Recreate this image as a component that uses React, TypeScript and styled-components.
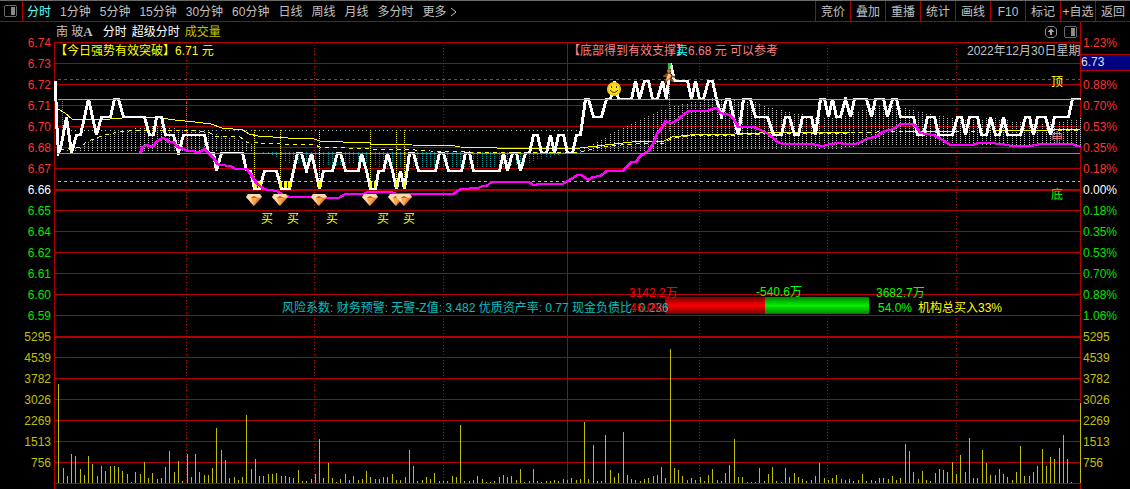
import React from "react";
import styled, { createGlobalStyle } from "styled-components";

const GRID = "#b00000";
const GREY = "#c0c0c0";

const Global = createGlobalStyle`
  * { box-sizing: border-box; }
  body {
    margin: 0;
    background: #000;
    color: ${GREY};
    font: 12px/14px "Liberation Sans", "Noto Sans CJK SC", sans-serif;
  }
`;

const Page = styled.div`
  display: flex;
  flex-direction: column;
  background: #000;
  overflow: hidden;
`;

const Toolbar = styled.header`
  display: flex;
  align-items: stretch;
  height: 22px;
  border-top: 1px solid #6a6a6a;
  border-bottom: 1px solid ${GRID};
`;

const BareButton = styled.button`
  padding: 0;
  border: 0;
  background: none;
  color: inherit;
  font: inherit;
  white-space: nowrap;
  cursor: pointer;
`;

const PanelToggle = styled(BareButton)`
  display: flex;
  align-items: center;
  width: 23px;
  padding-left: 4px;
  border-right: 1px solid ${GRID};
`;

const Periods = styled.nav`
  display: flex;
  flex: 1;
  gap: 9px;
  padding: 2px 0 0 4px;
`;

const PeriodButton = styled(BareButton)<{ $active?: boolean }>`
  display: flex;
  align-items: center;
  gap: 3px;
  color: ${(p) => (p.$active ? "#54ffff" : GREY)};
`;

const Actions = styled.nav`
  display: flex;
`;

const ActionButton = styled(BareButton)`
  width: 35px;
  padding-top: 2px;
  border-left: 1px solid ${GRID};
`;

const Body = styled.main`
  display: grid;
  grid-template-columns: 54px minmax(0, 1fr) 50px;
`;

const Axis = styled.ul<{ $side: "left" | "right" }>`
  margin: 0;
  padding: 11px 0 0;
  list-style: none;
  text-align: ${(p) => (p.$side === "left" ? "right" : "left")};
  border-left: ${(p) => (p.$side === "right" ? `1px solid ${GRID}` : "0")};
`;

const Tick = styled.li<{ $color: string }>`
  height: 21px;
  padding: 0 3px 0 2px;
  line-height: 21px;
  color: ${(p) => p.$color};
`;

const CurrentPrice = styled.li`
  height: 17px;
  margin-bottom: 4px;
  border: solid ${GRID};
  border-width: 1px 0;
  background: #000080;
  color: #e0e0e0;
  line-height: 14px;
`;

const Center = styled.section`
  min-width: 0;
`;

const Heading = styled.div`
  display: flex;
  align-items: center;
  gap: 5px;
  height: 20px;
  padding: 0 3px 0 2px;
  color: #fff;
  line-height: 16px;
`;

const StockName = styled.h1`
  margin: 0 5px 0 0;
  font: inherit;
  color: ${GREY};
`;

const Latin = styled.span`
  font: bold 13px/14px "Liberation Serif", serif;
`;

const VolumeName = styled.span`
  flex: 1;
  color: #c0c000;
`;

const HeadingTools = styled.div`
  display: flex;
  gap: 7px;
`;

const IconButton = styled(BareButton)`
  display: flex;
`;

const Plot = styled.div`
  position: relative;
  height: 447px;
`;

const Canvas = styled.svg`
  display: block;
  width: 100%;
  height: 447px;
  overflow: visible;
`;

const Clip = styled.div`
  position: absolute;
  inset: 0;
  overflow: hidden;
`;

const Note = styled.span<{ $color: string }>`
  position: absolute;
  color: ${(p) => p.$color};
  line-height: 16px;
  white-space: nowrap;
`;

const Marker = styled.svg`
  position: absolute;
  overflow: visible;
`;

const FlowBar = styled.div<{ $tone: "buy" | "sell" }>`
  position: absolute;
  top: 255px;
  height: 17px;
  background: ${(p) =>
    p.$tone === "buy"
      ? "linear-gradient(#780000, #ff0000 50%, #780000)"
      : "linear-gradient(#008000, #00f000 50%, #008000)"};
`;

/* Horizontal scale: one slot per trading minute, 240 slots across the plot. */
const LEFT = 54;
const WIDTH = 1026;
const minuteX = (i: number) => LEFT + Math.round((i * WIDTH) / 240);
const pct = (x: number) => `${((x - LEFT) / WIDTH) * 100}%`;

const volume = [
  99, 15, 7, 29, 27, 14, 8, 27, 19, 7, 17, 12, 17, 17, 16, 12, 9, 1, 11, 9,
  21, 5, 10, 4, 5, 16, 32, 11, 22, 2, 29, 6, 29, 11, 8, 8, 15, 55, 33, 23,
  5, 6, 3, 6, 68, 14, 24, 7, 7, 9, 9, 10, 7, 7, 6, 5, 13, 2, 2, 4,
  9, 44, 5, 20, 5, 1, 4, 9, 3, 7, 3, 4, 12, 6, 4, 4, 6, 6, 9, 3,
  3, 6, 33, 17, 2, 3, 6, 4, 10, 2, 2, 2, 7, 6, 58, 2, 2, 3, 7, 4,
  1, 1, 2, 6, 8, 6, 7, 3, 14, 1, 2, 14, 2, 1, 2, 2, 3, 2, 4, 3,
  5, 3, 4, 61, 4, 38, 2, 2, 48, 13, 6, 10, 51, 8, 4, 3, 2, 4, 5, 7,
  8, 16, 5, 134, 15, 13, 7, 3, 5, 3, 6, 2, 8, 14, 3, 2, 10, 18, 44, 6,
  6, 1, 1, 1, 15, 2, 9, 16, 2, 1, 15, 6, 10, 6, 4, 2, 3, 7, 20, 5,
  3, 5, 8, 4, 3, 4, 2, 3, 9, 2, 3, 2, 5, 5, 4, 7, 3, 5, 39, 32,
  11, 4, 12, 3, 2, 10, 14, 13, 11, 21, 9, 28, 11, 45, 5, 5, 33, 20, 8, 8,
  14, 9, 6, 3, 11, 37, 7, 7, 11, 17, 34, 17, 26, 24, 35, 48, 24, 1, 0, 80,
];

const price =
  "55,81 56,120 58,153 60,149 66,117 71,153 76,135 80,135 88,99 96,135 101,117 110,117 114,99 118,99 123,117 144,117 149,135 153,135 156,117 161,117 165,135 173,135 178,153 183,135 204,135 208,153 213,153 216,171 221,153 242,153 246,170 250,171 254,189 259,189 264,171 276,171 281,189 289,189 297,153 301,153 306,171 311,153 315,171 319,189 323,171 332,171 337,153 340,153 345,171 358,171 361,153 366,171 370,189 375,189 378,171 383,171 387,153 392,171 396,189 400,171 404,189 409,153 413,153 418,171 435,171 439,153 443,153 448,171 461,171 465,153 469,153 473,171 499,171 503,153 507,171 512,153 516,153 520,171 525,153 529,153 533,135 537,135 541,153 546,153 550,135 554,153 558,135 563,135 567,153 572,153 576,135 580,135 585,99 588,99 593,117 601,117 606,99 610,99 614,81 618,99 631,99 635,81 639,99 644,81 648,81 652,99 657,99 662,81 666,99 670,63 674,81 687,81 691,99 695,81 699,99 703,99 708,81 712,81 716,99 721,117 726,99 729,99 733,117 738,135 743,99 750,99 755,117 767,117 773,135 781,135 785,117 789,117 794,135 798,135 802,117 811,117 815,135 820,99 824,99 828,117 832,99 836,117 840,117 845,99 850,117 854,99 866,99 871,117 875,99 883,99 887,117 892,99 896,99 900,117 913,117 917,135 923,135 927,117 934,117 938,135 952,135 957,117 961,117 965,135 969,117 977,117 981,135 986,135 990,117 995,135 999,135 1003,117 1007,135 1020,135 1025,117 1029,117 1033,135 1037,117 1045,117 1050,135 1054,117 1068,117 1072,99 1080,99";

const strength =
  "140,153 142,147 146,145 152,147 157,141 162,138 166,139 168,142 173,142 177,147 183,149 188,151 199,152 204,149 208,153 213,158 217,164 220,165 230,166 235,169 246,169 250,174 256,183 263,189 276,191 283,195 289,197 315,197 317,198 338,198 345,194 363,194 367,192 391,192 396,194 453,194 460,189 478,188 482,186 486,186 491,182 528,182 533,185 540,184 562,184 569,180 577,175 581,175 588,180 592,177 600,176 606,171 622,171 631,162 635,162 640,156 648,151 652,145 657,133 662,127 665,121 670,123 674,122 680,117 688,111 707,111 711,109 716,108 720,113 729,115 733,119 738,127 753,127 760,130 768,134 777,142 783,144 812,144 815,145 822,146 830,144 838,143 845,144 855,144 860,142 868,138 875,137 884,131 893,129 900,124 912,124 915,126 920,133 933,135 942,140 950,145 972,145 978,143 988,143 1001,144 1012,146 1030,146 1040,144 1072,144 1076,146 1080,146";

const average =
  "58,109 65,113 72,119 110,119 135,117 155,117 175,120 195,122 211,124 222,128 243,130 249,134 258,136 288,138 314,139 320,141 343,142 370,143 371,144 412,145 455,146 460,147 497,148 580,148 605,145 632,142 664,141 672,137 690,135 735,134 760,133 850,132 905,132 960,131 1000,131 1050,130 1080,129";

const slowAverage =
  "60,150 66,149 80,147 88,141 105,135 118,132 140,130 185,130 208,132 215,136 240,137 247,142 260,143 280,144 315,145 320,147 370,149 400,149 430,151 470,152 580,152 600,147 632,144 664,143 672,138 690,136 735,135 760,134 850,133 905,131 960,132 1000,130 1050,131 1080,130";

/* Envelopes of the dotted columns that hang on the 153 base line. */
type Pt = [number, number];
const leftTop: Pt[] = [[62, 151], [80, 147], [88, 141], [105, 135], [118, 131], [140, 127], [160, 126], [173, 128], [185, 130], [208, 133], [225, 136], [240, 140], [252, 144]];
const leftBottom: Pt[] = [[62, 152], [252, 152]];
const tealTop: Pt[] = [[263, 152], [580, 152]];
const tealBottom: Pt[] = [[263, 153], [280, 158], [292, 164], [310, 162], [325, 165], [370, 164], [385, 170], [400, 168], [430, 167], [500, 167], [525, 164], [545, 158], [565, 154], [580, 154]];
const rightTop: Pt[] = [[572, 153], [590, 145], [600, 141], [614, 131], [625, 127], [650, 114], [665, 109], [685, 103], [700, 101], [710, 98], [740, 101], [757, 102], [766, 107], [790, 112], [815, 117], [840, 117], [860, 110], [885, 105], [905, 108], [917, 111], [930, 114], [950, 117], [970, 121], [990, 117], [1020, 122], [1045, 123], [1070, 120], [1080, 118]];
const rightBottom: Pt[] = [[572, 152], [640, 151], [830, 150], [860, 146], [1080, 146]];

const at = (pts: Pt[], x: number) => {
  for (let i = 1; i < pts.length; i++) {
    const [x0, y0] = pts[i - 1];
    const [x1, y1] = pts[i];
    if (x <= x1) return Math.round(y0 + ((y1 - y0) * (x - x0)) / (x1 - x0));
  }
  return pts[pts.length - 1][1];
};

const column = (x: number, y0: number, y1: number) => {
  let d = "";
  for (let y = y0 + (y0 % 2); y < y1; y += 2) d += `M${x} ${y}h1v1h-1z`;
  return d;
};

const minutes = Array.from({ length: 240 }, (_, i) => i + 1);
const columns = (top: Pt[], bottom: Pt[]) =>
  minutes
    .map(minuteX)
    .filter((x) => x >= top[0][0] && x <= top[top.length - 1][0])
    .map((x) => column(x, at(top, x), at(bottom, x)))
    .join("");

const greyColumns = columns(leftTop, leftBottom) + columns(rightTop, rightBottom);
const tealColumns = columns(tealTop, tealBottom);
const dotRow = minutes.map(minuteX).filter((x) => x < 582).map((x) => `M${x} 130h1v1h-1z`).join("");

const rows = Array.from({ length: 22 }, (_, i) => i);
const dottedHours = [186, 314, 443, 699, 827, 956];
const buyLines = [254, 280, 319, 370, 396, 404];
const buyBlocks: Pt[] = [[254, 3], [258, 3], [279, 3], [284, 3], [288, 3], [318, 3], [369, 3], [374, 2], [395, 3], [403, 3]];
const buyLabels = [261, 287, 326, 377, 403];

const RED = "#ff3232";
const GREEN = "#00e600";
const OLIVE = "#c0c000";
const tone = (i: number) => (i < 7 ? RED : i === 7 ? "#fff" : i < 14 ? GREEN : OLIVE);
const volumeTicks = ["5295", "4539", "3782", "3026", "2269", "1513", "756"];
const leftTicks = ["6.74", "6.73", "6.72", "6.71", "6.70", "6.68", "6.67", "6.66", "6.65", "6.64", "6.62", "6.61", "6.60", "6.59", ...volumeTicks];
const rightTicks = ["1.23%", "6.73", "0.88%", "0.70%", "0.53%", "0.35%", "0.18%", "0.00%", "0.18%", "0.35%", "0.53%", "0.70%", "0.88%", "1.06%", ...volumeTicks];

const periods = ["分时", "1分钟", "5分钟", "15分钟", "30分钟", "60分钟", "日线", "周线", "月线", "多分时"];
const actions = ["竞价", "叠加", "重播", "统计", "画线", "F10", "标记", "+自选", "返回"];

const notes: { x: number; y: number; color: string; text: string }[] = [
  { x: 55, y: 1, color: "#ffff00", text: "【今日强势有效突破】6.71 元" },
  { x: 568, y: 1, color: "#ff8080", text: "【底部得到有效支撑】6.68 元 可以参考" },
  { x: 676, y: 1, color: "#00ffff", text: "卖" },
  { x: 967, y: 1, color: GREY, text: "2022年12月30日星期" },
  { x: 1051, y: 32, color: "#ffff00", text: "顶" },
  { x: 1051, y: 88, color: "#ff8080", text: "申" },
  { x: 1051, y: 145, color: "#00ff00", text: "底" },
  { x: 282, y: 258, color: "#00c0c0", text: "风险系数: 财务预警: 无警-Z值: 3.482 优质资产率: 0.77 现金负债比: 0.236" },
  { x: 629, y: 243, color: "#ff0000", text: "3142.2万" },
  { x: 630, y: 258, color: "#ff0000", text: "46.0%" },
  { x: 756, y: 242, color: "#00ff00", text: "-540.6万" },
  { x: 876, y: 243, color: "#00ff00", text: "3682.7万" },
  { x: 878, y: 258, color: "#00ff00", text: "54.0%" },
  { x: 918, y: 258, color: "#ffff00", text: "机构总买入33%" },
];

const PanelIcon = () => (
  <svg width="13" height="12" viewBox="0 0 13 12" shapeRendering="crispEdges" aria-hidden="true">
    <path d="M1 0h11v1h1v10h-1v1H1v-1H0V1h1zM1 1v10h11V1z" fill="#6a6a6a" fillRule="evenodd" />
    <path d="M7 2h4v8H7z" fill="#8a8a8a" />
  </svg>
);

const UpIcon = () => (
  <svg width="12" height="12" viewBox="0 0 12 12" aria-hidden="true">
    <path d="M3 .5h6L11.500 3v6L9 11.500H3L.5 9V3z" fill="none" stroke="#8a8a8a" />
    <path d="M6 2.500 9.500 6H7v3H5V6H2.500z" fill="#a8a8a8" />
  </svg>
);

const Diamond = ({ x }: { x: number }) => (
  <Marker width="16" height="12" viewBox="0 0 16 12" style={{ left: `calc(${pct(x)} - 8px)`, top: 152 }}>
    <path d="M2 0h12l2 3-8 9-8-9z" fill="#e08838" />
    <path d="M2 0h12l2 3H0z" fill="#f4c088" />
    <path d="M4 4l4-3 4 3z" fill="#c86828" />
    <path d="M0 3h5l3 9z" fill="#ffd0a0" />
    <path d="M5 4h6l-3 7z" fill="#ffa848" />
    <path d="M2 1h12M1 3h4l3-2 3 2h4" stroke="#fff0d8" fill="none" />
  </Marker>
);

const Smiley = () => (
  <Marker width="14" height="14" viewBox="0 0 14 14" style={{ left: `calc(${pct(614)} - 7px)`, top: 40 }}>
    <circle cx="7" cy="7" r="7" fill="#ffdf20" />
    <circle cx="7" cy="7" r="6" fill="none" stroke="#e8bc10" />
    <path d="M4 4h1v2H4zM9 4h1v2H9z" fill="#503800" />
    <path d="M3 8q4 5 8 0" fill="none" stroke="#503800" />
  </Marker>
);

const Runner = () => (
  <Marker width="12" height="20" viewBox="0 0 12 20" style={{ left: `calc(${pct(669)} - 6px)`, top: 21 }}>
    <path d="M4 5h4v8H4z" fill="#000" />
    <path d="M5 0h3v6H5z" fill="#30c040" />
    <path d="M8 3v3M9 7v3" stroke="#fff" />
    <circle cx="6" cy="8" r="2" fill="#c07838" />
    <path d="M4 10h4v2l4 1v2l-4-1 1 2 2 2v1H9l-3-3-3 4H1l2-4v-2H0v-1z" fill="#8a4818" />
    <path d="M5 11h2l1 2-1 2-2 1-2 2 1-4z" fill="#ffc078" />
  </Marker>
);

const ChartCanvas = () => (
  <Canvas viewBox="54 42 1026 447" preserveAspectRatio="none" shapeRendering="crispEdges" role="img" aria-label="分时走势">
    <g fill={GRID}>
      {rows.map((i) => (
        <rect key={i} x="54" y={i === 7 ? 189 : 42 + i * 21} width="1026" height={i === 7 || i === 14 ? 2 : 1} />
      ))}
      <rect x="54" y="42" width="1" height="447" />
      <rect x="567" y="42" width="1" height="441" />
    </g>
    {dottedHours.map((x) => (
      <line key={x} x1={x} x2={x} y1="45" y2="483" stroke="#c00000" strokeDasharray="1 2" />
    ))}
    <path d={greyColumns} fill="#c0c0c0" />
    <path d={dotRow} fill="#c0c0c0" />
    <path d={tealColumns} fill="#009090" />
    {volume.map((h, i) => (
      <rect key={i} x={minuteX(i + 1)} y={483 - h} width="1" height={h} fill={OLIVE} />
    ))}
    <path d="M62 99V147M186 99V153" stroke="#00b0b0" strokeDasharray="1 1" />
    <path d="M58 79H1080" stroke="#ff0080" strokeDasharray="3 3" />
    <path d="M58 181H1080" stroke="#00ffff" strokeDasharray="3 3" />
    {buyLines.map((x) => (
      <path key={x} d={`M${x} 130V189`} stroke="#ffff00" strokeDasharray="1 1" />
    ))}
    <path d="M669 84V132" stroke="#00ff00" strokeDasharray="1 1" />
    <g fill="none">
      <polyline points={average} stroke="#ffff00" />
      <polyline points={slowAverage} stroke="#ffff00" strokeDasharray="4 4" />
      <polyline points={price} stroke="#ffffff" strokeWidth="2" />
      <polyline points={price} stroke="#ffffff" strokeWidth="2" transform="translate(1 0)" />
    </g>
    {buyBlocks.map(([x, w]) => (
      <rect key={x} x={x} y="181" width={w} height="7" fill="#ffff00" />
    ))}
    <g fill="none" stroke="#ff00ff" strokeWidth="2">
      <polyline points={strength} />
      <polyline points={strength} transform="translate(1 0)" />
    </g>
    <rect x="58" y="99" width="1022" height="1" fill="#ff8080" />
    <rect x="57" y="153" width="1023" height="1" fill="#40c040" />
  </Canvas>
);

export default function App() {
  return (
    <Page>
      <Global />
      <Toolbar>
        <PanelToggle aria-label="侧栏"><PanelIcon /></PanelToggle>
        <Periods>
          {periods.map((p, i) => (
            <PeriodButton key={p} $active={i === 0}>{p}</PeriodButton>
          ))}
          <PeriodButton>
            更多
            <svg width="7" height="10" viewBox="0 0 7 10" aria-hidden="true">
              <path d="M1 1l5 4-5 4" fill="none" stroke={GREY} />
            </svg>
          </PeriodButton>
        </Periods>
        <Actions>
          {actions.map((a) => (
            <ActionButton key={a}>{a}</ActionButton>
          ))}
        </Actions>
      </Toolbar>
      <Body>
        <Axis $side="left">
          {leftTicks.map((t, i) => (
            <Tick key={i} $color={tone(i)}>{t}</Tick>
          ))}
        </Axis>
        <Center>
          <Heading>
            <StockName>南 玻<Latin>A</Latin></StockName>
            <span>分时</span>
            <span>超级分时</span>
            <VolumeName>成交量</VolumeName>
            <HeadingTools>
              <IconButton aria-label="上移"><UpIcon /></IconButton>
              <IconButton aria-label="面板"><PanelIcon /></IconButton>
            </HeadingTools>
          </Heading>
          <Plot>
            <ChartCanvas />
            {buyLines.map((x) => <Diamond key={x} x={x} />)}
            <Smiley />
            <Runner />
            <FlowBar $tone="buy" style={{ left: pct(665), width: `${(100 / WIDTH) * 100}%` }} />
            <FlowBar $tone="sell" style={{ left: pct(765), width: `${(104 / WIDTH) * 100}%` }} />
            <Clip>
              {buyLabels.map((x) => (
                <Note key={x} $color="#ffff00" style={{ left: pct(x), top: 169 }}>买</Note>
              ))}
              {notes.map((n) => (
                <Note key={n.text} $color={n.color} style={{ left: pct(n.x), top: n.y }}>{n.text}</Note>
              ))}
            </Clip>
          </Plot>
        </Center>
        <Axis $side="right">
          {rightTicks.map((t, i) =>
            i === 1 ? <CurrentPrice key={i}>{t}</CurrentPrice> : <Tick key={i} $color={tone(i)}>{t}</Tick>
          )}
        </Axis>
      </Body>
    </Page>
  );
}
